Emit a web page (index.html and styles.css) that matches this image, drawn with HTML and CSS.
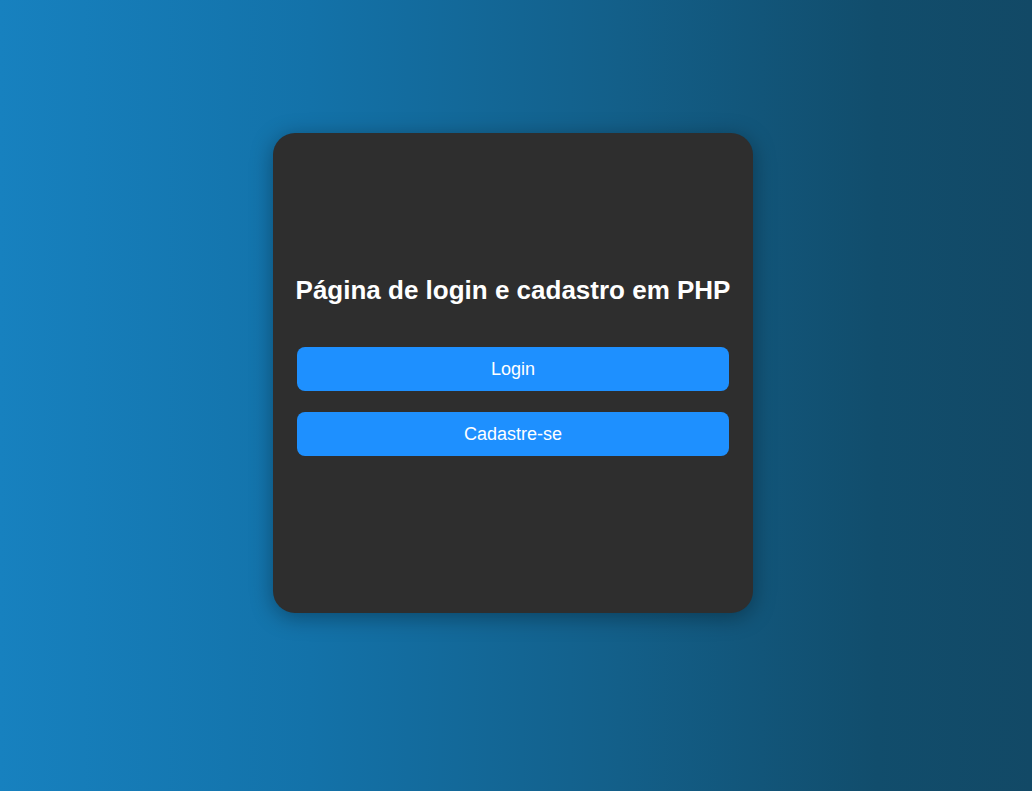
FILE: index.html
```html
<!DOCTYPE html>
<html lang="pt-BR">
<head>
<meta charset="utf-8">
<title>Login e cadastro</title>
<link rel="stylesheet" href="styles.css">
</head>
<body>
<main class="card">
  <h1 class="title">Página de login e cadastro em PHP</h1>
  <div class="actions">
    <a class="btn" href="#">Login</a>
    <a class="btn" href="#">Cadastre-se</a>
  </div>
</main>
</body>
</html>
```
FILE: styles.css
```css
html, body {
  margin: 0;
  height: 100%;
}
body {
  font-family: "Liberation Sans", Arial, sans-serif;
  background: linear-gradient(to right, #1781bf 0%, #1372a9 30%, #135f89 60%, #114d6c 85%, #124966 100%);
  display: flex;
  align-items: flex-start;
  justify-content: center;
}
.card {
  width: 480px;
  height: 480px;
  box-sizing: border-box;
  padding: 0 24px;
  background: #2e2e2e;
  border-radius: 22px;
  box-shadow: 0 4px 22px rgba(0, 0, 0, 0.35);
  display: flex;
  flex-direction: column;
  justify-content: center;
  margin: 133px 6px 0 0;
}
.title {
  margin: 0 -12px 43px;
  color: #fff;
  font-size: 26px;
  line-height: 28px;
  font-weight: bold;
  text-align: center;
  white-space: nowrap;
}
.actions {
  display: flex;
  flex-direction: column;
  gap: 21px;
  margin-bottom: 14px;
}
.btn {
  display: block;
  height: 44px;
  line-height: 44px;
  background: #1e90ff;
  color: #fff;
  text-align: center;
  text-decoration: none;
  font-size: 18px;
  border-radius: 8px;
}
```
